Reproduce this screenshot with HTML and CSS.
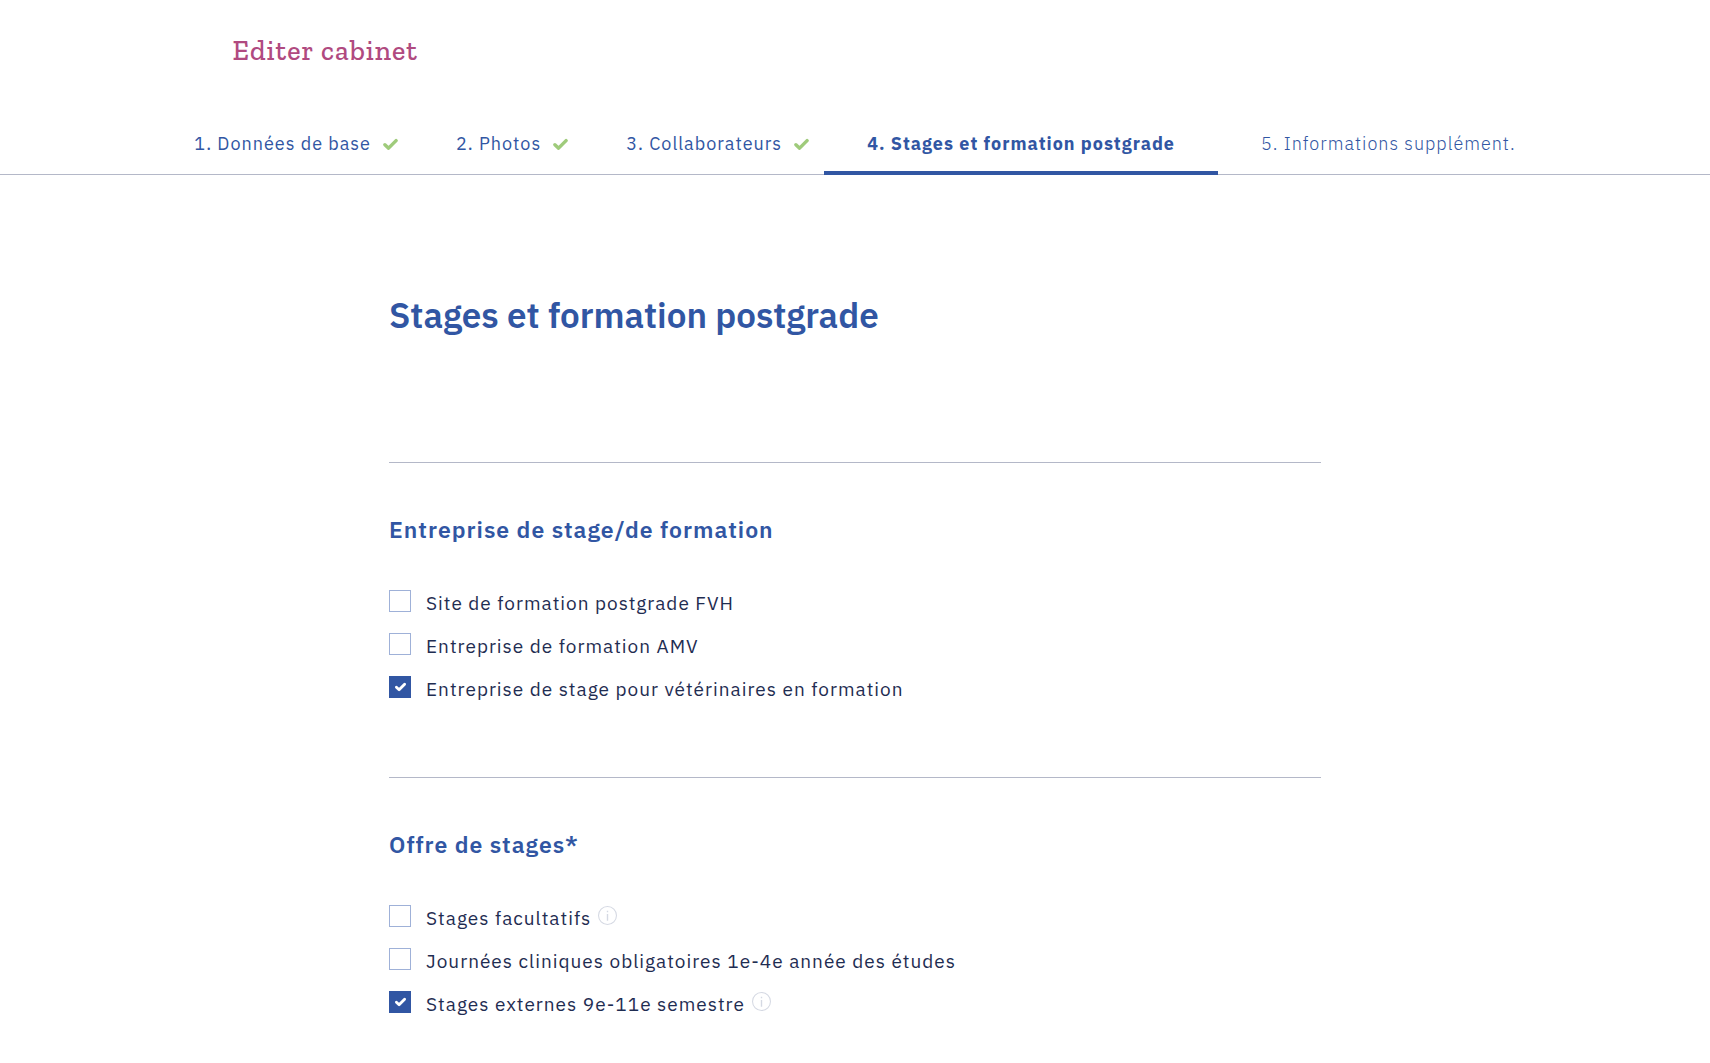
FILE: index.html
```html
<!DOCTYPE html>
<html lang="fr">
<head>
<meta charset="utf-8">
<meta name="viewport" content="width=device-width, initial-scale=1">
<title>Editer cabinet</title>
<link rel="stylesheet" href="styles.css">
</head>
<body>
<svg class="sprite" aria-hidden="true">
  <symbol id="check" viewBox="0 0 14 12"><path d="M1.8 6.2 5.2 9.4 12.2 2.4" fill="none" stroke="currentColor" stroke-width="3.2" stroke-linecap="round" stroke-linejoin="round"/></symbol>
  <symbol id="info" viewBox="0 0 18 18"><circle cx="9" cy="9" r="8.5" fill="none" stroke="currentColor"/><path d="M9 7.5V14M9 4.5V6" fill="none" stroke="currentColor" stroke-width="1.3"/></symbol>
</svg>
<header class="header">
  <p class="header-title">Editer cabinet</p>
  <nav class="steps" aria-label="Étapes">
    <a class="step step-done" href="#base">1. Données de base <svg class="step-check" aria-hidden="true"><use href="#check"/></svg></a>
    <a class="step step-done" href="#photos">2. Photos <svg class="step-check" aria-hidden="true"><use href="#check"/></svg></a>
    <a class="step step-done" href="#team">3. Collaborateurs <svg class="step-check" aria-hidden="true"><use href="#check"/></svg></a>
    <a class="step step-active" href="#stages" aria-current="step">4. Stages et formation postgrade</a>
    <a class="step step-light" href="#infos">5. Informations supplément.</a>
  </nav>
</header>
<main class="content">
  <h1 class="page-title">Stages et formation postgrade</h1>
  <form>
    <section class="group">
      <h2 class="group-title">Entreprise de stage/de formation</h2>
      <div class="option"><input class="box" type="checkbox" id="fvh"><label class="label" for="fvh">Site de formation postgrade FVH</label></div>
      <div class="option"><input class="box" type="checkbox" id="amv"><label class="label" for="amv">Entreprise de formation AMV</label></div>
      <div class="option"><input class="box" type="checkbox" id="vet" checked><label class="label" for="vet">Entreprise de stage pour vétérinaires en formation</label></div>
    </section>
    <section class="group">
      <h2 class="group-title">Offre de stages*</h2>
      <div class="option"><input class="box" type="checkbox" id="fac"><label class="label" for="fac">Stages facultatifs</label><button class="info" type="button" aria-label="Informations"><svg class="info-icon" aria-hidden="true"><use href="#info"/></svg></button></div>
      <div class="option"><input class="box" type="checkbox" id="clin"><label class="label" for="clin">Journées cliniques obligatoires 1e-4e année des études</label></div>
      <div class="option"><input class="box" type="checkbox" id="ext" checked><label class="label" for="ext">Stages externes 9e-11e semestre</label><button class="info" type="button" aria-label="Informations"><svg class="info-icon" aria-hidden="true"><use href="#info"/></svg></button></div>
    </section>
  </form>
</main>
</body>
</html>
```
FILE: styles.css
```css
* {
  box-sizing: border-box;
}

body {
  margin: 0;
  background: #fff;
  color: #1f2d52;
  font-family: "IBM Plex Sans", Roboto, sans-serif;
  font-size: 19px;
  line-height: 24px;
  letter-spacing: 1px;
}

.sprite {
  display: none;
}

.header {
  padding-top: 33px;
  border-bottom: 1px solid #b4b8c8;
}

.header-title {
  margin: 0 0 52px;
  padding-left: 13.6%;
  color: #b04a80;
  font-family: "Zilla Slab", "DejaVu Serif", serif;
  font-size: 28px;
  font-weight: 500;
  line-height: 36px;
}

.steps {
  display: flex;
  justify-content: center;
  margin-bottom: -1px;
  font-size: 18px;
}

.step {
  display: flex;
  align-items: center;
  gap: 12px;
  padding: 11px 43px 15px;
  border-bottom: 4px solid transparent;
  color: #3156a3;
  text-decoration: none;
  white-space: nowrap;
}

.step-done {
  padding-right: 15px;
}

.step-light {
  font-weight: 300;
}

.step-active {
  border-color: #3156a3;
  font-weight: 700;
}

.step-check {
  width: 15px;
  height: 13px;
  color: #9fcb7b;
}

.content {
  width: 54.5%;
  margin: 0 auto;
  padding-top: 115px;
}

.page-title {
  margin: 0 0 122px;
  color: #3156a3;
  font-size: 35px;
  font-weight: 600;
  line-height: 50px;
  letter-spacing: 0;
}

.group {
  padding: 49px 0 58px;
  border-top: 1px solid #b4b8c8;
}

.group:last-child {
  padding-bottom: 0;
}

.group-title {
  margin: 0 0 44px;
  color: #3156a3;
  font-size: 23px;
  font-weight: 600;
  line-height: 34px;
}

.option {
  display: flex;
  align-items: flex-start;
  height: 43px;
}

.box {
  appearance: none;
  width: 22px;
  height: 22px;
  margin: 0 15px 0 0;
  border: 1px solid #9fb1d8;
  background: #fff;
}

.box:checked {
  border-color: #3156a3;
  background: #3156a3 url("data:image/svg+xml,%3Csvg xmlns='http://www.w3.org/2000/svg' viewBox='0 0 14 12'%3E%3Cpath d='M1.8 6.2 5.2 9.4 12.2 2.4' fill='none' stroke='white' stroke-width='3.6' stroke-linecap='round' stroke-linejoin='round'/%3E%3C/svg%3E") center / 11px 10px no-repeat;
}

.label {
  padding-top: 1px;
}

.info {
  display: flex;
  margin: 1px 0 0 7px;
  padding: 0;
  border: 0;
  background: none;
  color: #d5d9e3;
}

.info-icon {
  width: 19px;
  height: 19px;
}
```
